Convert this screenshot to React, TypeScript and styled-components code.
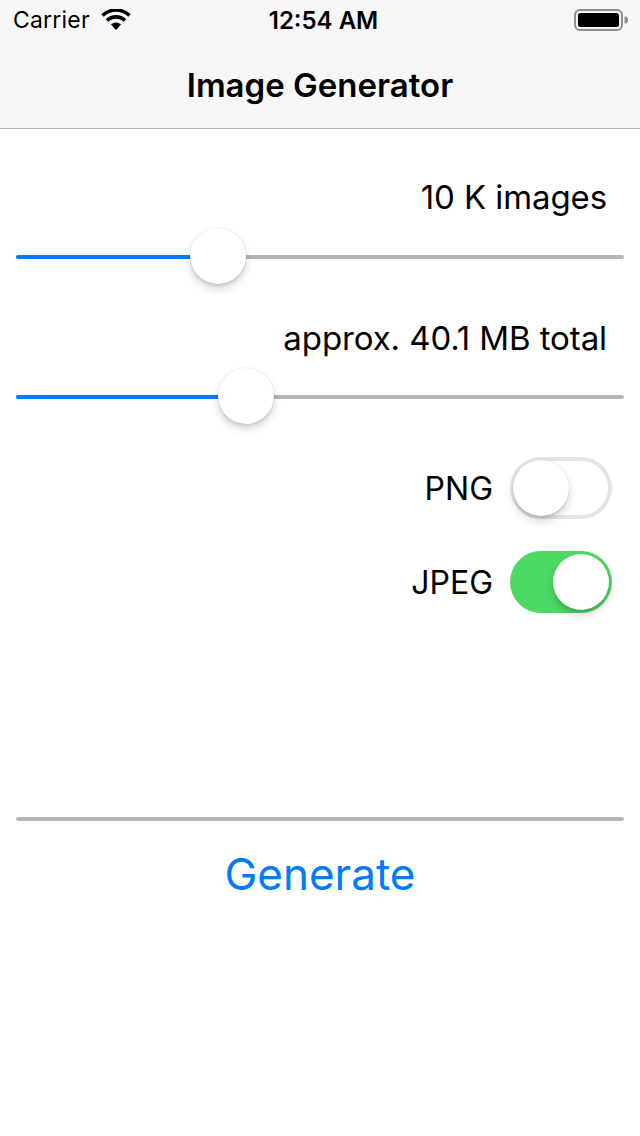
import React from "react";
import styled, { createGlobalStyle } from "styled-components";

const GlobalStyle = createGlobalStyle`
  html, body { margin: 0; padding: 0; background: #ffffff; }
  body { font-family: Inter, "Noto Sans", "Liberation Sans", sans-serif; color: #000; }
  * { box-sizing: border-box; }
`;

const Screen = styled.div`
  width: 640px;
  height: 1136px;
  display: flex;
  flex-direction: column;
  background: #fff;
`;

const Header = styled.header`
  background: #f7f7f7;
  border-bottom: 1px solid #b2b2b2;
  display: flex;
  flex-direction: column;
`;

const StatusBar = styled.div`
  height: 40px;
  display: grid;
  grid-template-columns: 1fr auto 1fr;
  align-items: center;
  padding: 0 12px 0 13px;
  font-size: 23px;
`;

const StatusLeft = styled.div`
  display: flex;
  align-items: center;
  gap: 10px;
  letter-spacing: 0.2px;
`;

const StatusTime = styled.div`
  font-weight: 600;
  font-size: 24px;
  padding-left: 6px;
`;

const StatusRight = styled.div`
  display: flex;
  justify-content: flex-end;
  align-items: center;
`;

const NavBar = styled.div`
  height: 88px;
  display: flex;
  align-items: center;
  justify-content: center;
  padding-top: 2px;
`;

const Title = styled.h1`
  margin: 0;
  font-size: 33px;
  font-weight: 600;
  letter-spacing: 0px;
`;

const Content = styled.main`
  display: flex;
  flex-direction: column;
  padding: 0 16px;
`;

const ValueLabel = styled.div<{ $top: number }>`
  margin-top: ${(p) => p.$top}px;
  height: 40px;
  line-height: 40px;
  text-align: right;
  padding-right: 17px;
  font-size: 33px;
  letter-spacing: -0.1px;
`;

const SliderWrap = styled.div<{ $top: number }>`
  margin-top: ${(p) => p.$top}px;
  height: 56px;
  position: relative;
  display: flex;
  align-items: center;
`;

const Track = styled.div`
  width: 100%;
  height: 4px;
  margin-top: 2px;
  border-radius: 2px;
  background: #b6b6b6;
  display: flex;
`;

const Fill = styled.div`
  height: 100%;
  border-radius: 2px 0 0 2px;
  background: #007aff;
`;

const Thumb = styled.div`
  position: absolute;
  top: 0;
  width: 56px;
  height: 56px;
  border-radius: 50%;
  background: #fff;
  box-shadow: 0 0 0 0.5px rgba(0, 0, 0, 0.08), 0 5px 9px rgba(0, 0, 0, 0.16),
    0 3px 2px rgba(0, 0, 0, 0.06);
  transform: translateX(-50%);
`;

const SwitchRow = styled.div<{ $top: number }>`
  margin-top: ${(p) => p.$top}px;
  display: flex;
  justify-content: flex-end;
  align-items: center;
  gap: 17px;
  padding-right: 12px;
  height: 62px;
`;

const SwitchLabel = styled.span`
  font-size: 32px;
`;

const SwitchTrack = styled.div<{ $on: boolean }>`
  width: 102px;
  height: 62px;
  border-radius: 31px;
  background: ${(p) => (p.$on ? "#4cd964" : "#fff")};
  box-shadow: ${(p) => (p.$on ? "none" : "inset 0 0 0 4px #e5e5e5")};
  display: flex;
  align-items: center;
  justify-content: ${(p) => (p.$on ? "flex-end" : "flex-start")};
  padding: 3px;
`;

const SwitchKnob = styled.div`
  width: 56px;
  height: 56px;
  border-radius: 50%;
  background: #fff;
  box-shadow: 0 0 0 0.5px rgba(0, 0, 0, 0.06), 0 5px 8px rgba(0, 0, 0, 0.16),
    0 3px 2px rgba(0, 0, 0, 0.06);
`;

const Divider = styled.div`
  margin-top: 204px;
  height: 4px;
  border-radius: 2px;
  background: #b6b6b6;
`;

const GenerateButton = styled.button`
  margin-top: 26px;
  height: 52px;
  border: none;
  background: transparent;
  color: #007aff;
  font-family: inherit;
  font-size: 44px;
  font-weight: 400;
  padding: 0;
  cursor: pointer;
`;

const Wifi = () => (
  <svg width="32" height="22" viewBox="0 0 32 22">
    <path d="M16 21 L11 15.5 A7.5 7.5 0 0 1 21 15.5 Z" fill="#000" />
    <path
      d="M7 11.5 A13 13 0 0 1 25 11.5"
      stroke="#000"
      strokeWidth="3.6"
      fill="none"
    />
    <path
      d="M2.5 6.5 A19.5 19.5 0 0 1 29.5 6.5"
      stroke="#000"
      strokeWidth="3.6"
      fill="none"
    />
  </svg>
);

const Battery = () => (
  <svg width="54" height="22" viewBox="0 0 54 22">
    <rect x="1" y="1" width="47" height="20" rx="5" fill="none" stroke="#8e8e8e" strokeWidth="2" />
    <rect x="4" y="4" width="41" height="14" rx="2.5" fill="#000" />
    <path d="M50.5 7.5 A3.5 3.5 0 0 1 50.5 14.5 Z" fill="#8e8e8e" />
  </svg>
);

const Slider = ({ value, top }: { value: number; top: number }) => (
  <SliderWrap $top={top}>
    <Track>
      <Fill style={{ width: `${value * 100}%` }} />
    </Track>
    <Thumb style={{ left: `${value * 100}%` }} />
  </SliderWrap>
);

const Toggle = ({ label, on, top }: { label: string; on: boolean; top: number }) => (
  <SwitchRow $top={top}>
    <SwitchLabel>{label}</SwitchLabel>
    <SwitchTrack $on={on}>
      <SwitchKnob />
    </SwitchTrack>
  </SwitchRow>
);

export default function App() {
  return (
    <>
      <GlobalStyle />
      <Screen>
        <Header>
          <StatusBar>
            <StatusLeft>
              <span>Carrier</span>
              <Wifi />
            </StatusLeft>
            <StatusTime>12:54 AM</StatusTime>
            <StatusRight>
              <Battery />
            </StatusRight>
          </StatusBar>
          <NavBar>
            <Title>Image Generator</Title>
          </NavBar>
        </Header>
        <Content>
          <ValueLabel $top={48}>10 K images</ValueLabel>
          <Slider value={(218 - 16) / 608} top={11} />
          <ValueLabel $top={34}>approx. 40.1 MB total</ValueLabel>
          <Slider value={(246 - 16) / 608} top={10} />
          <Toggle label="PNG" on={false} top={33} />
          <Toggle label="JPEG" on={true} top={32} />
          <Divider />
          <GenerateButton>Generate</GenerateButton>
        </Content>
      </Screen>
    </>
  );
}
